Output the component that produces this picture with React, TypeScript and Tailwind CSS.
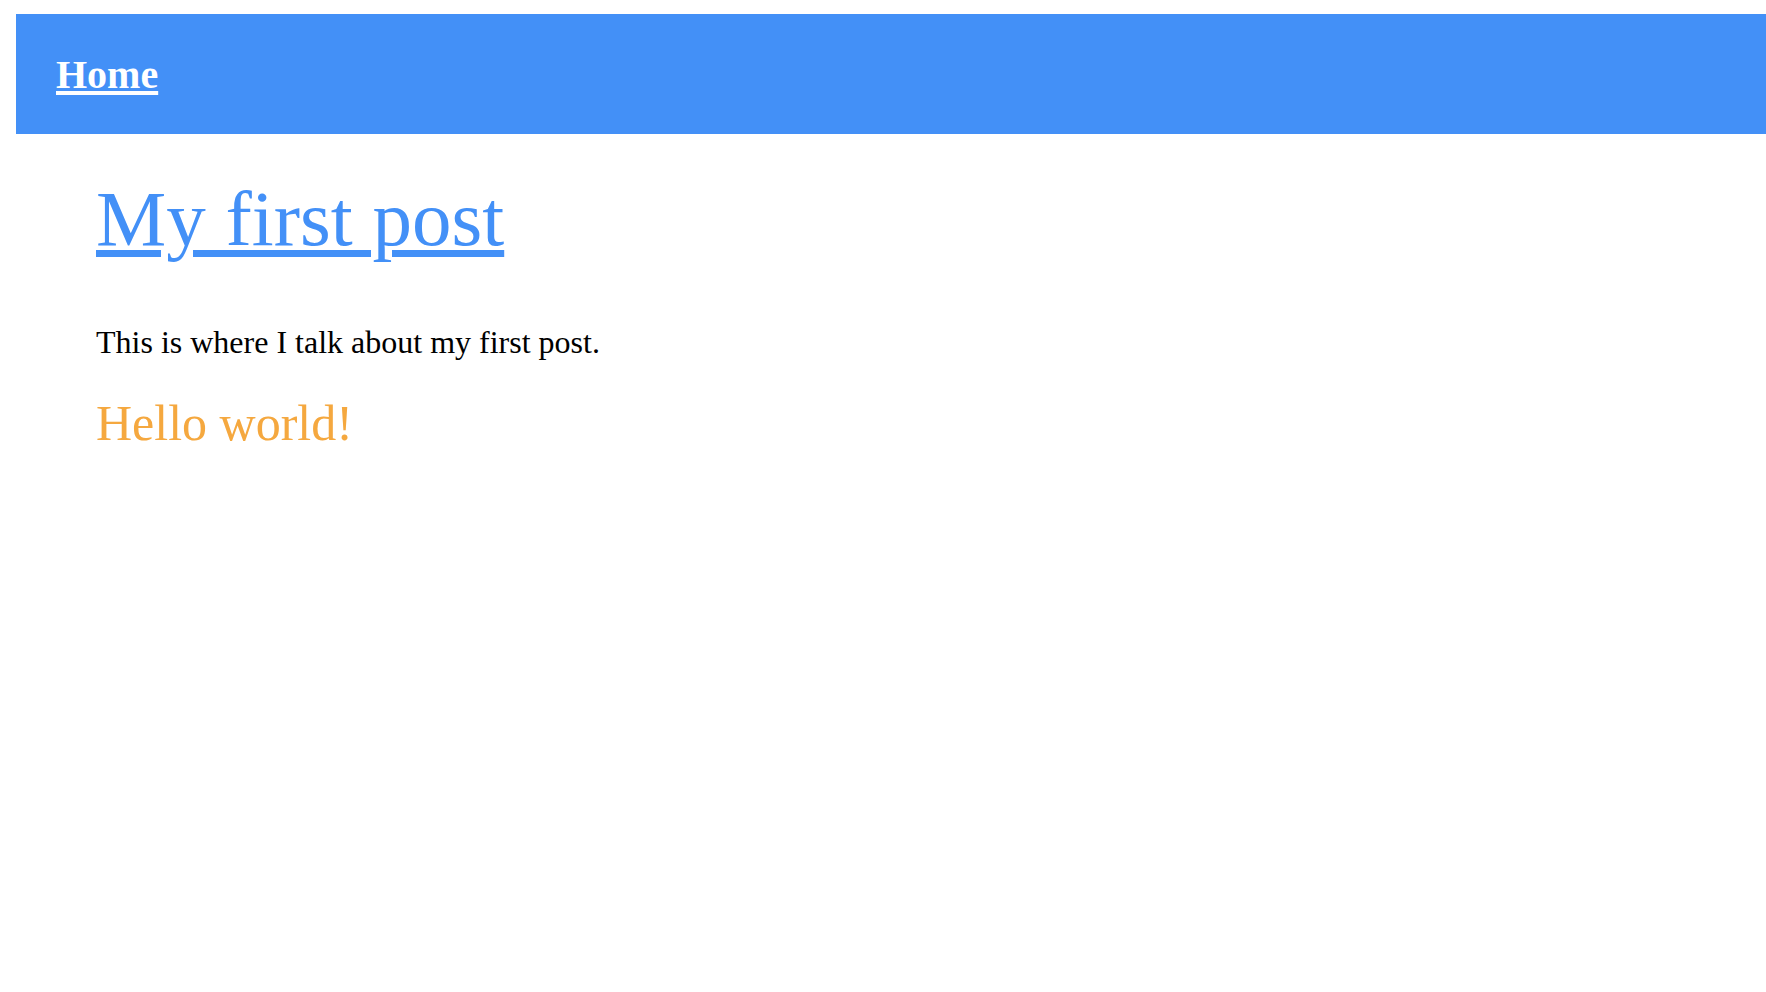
import React from 'react';

export default function App() {
  return (
    <div className="min-h-screen bg-white pt-[14px] pl-[16px] font-['Liberation_Serif','Times_New_Roman',serif]">
      {/* Top bar */}
      <header className="h-[120px] bg-[#4390f7] flex items-center px-10">
        <a href="#" className="mt-[2px] text-[40px] leading-[40px] font-bold text-white underline decoration-[4px] underline-offset-[3px]">
          Home
        </a>
      </header>

      {/* Post */}
      <main className="pl-20 pt-[45px]">
        <h1 className="text-[79px] leading-[79px] font-normal">
          <a href="#" className="text-[#4390f7] underline decoration-[7px] underline-offset-[5px]">
            My first post
          </a>
        </h1>
        <p className="mt-[68px] text-[32px] leading-[32px] text-black">
          This is where I talk about my first post.
        </p>
        <p className="mt-[40px] text-[50px] leading-[50px] text-[#f5a83f]">
          Hello world!
        </p>
      </main>
    </div>
  );
}
